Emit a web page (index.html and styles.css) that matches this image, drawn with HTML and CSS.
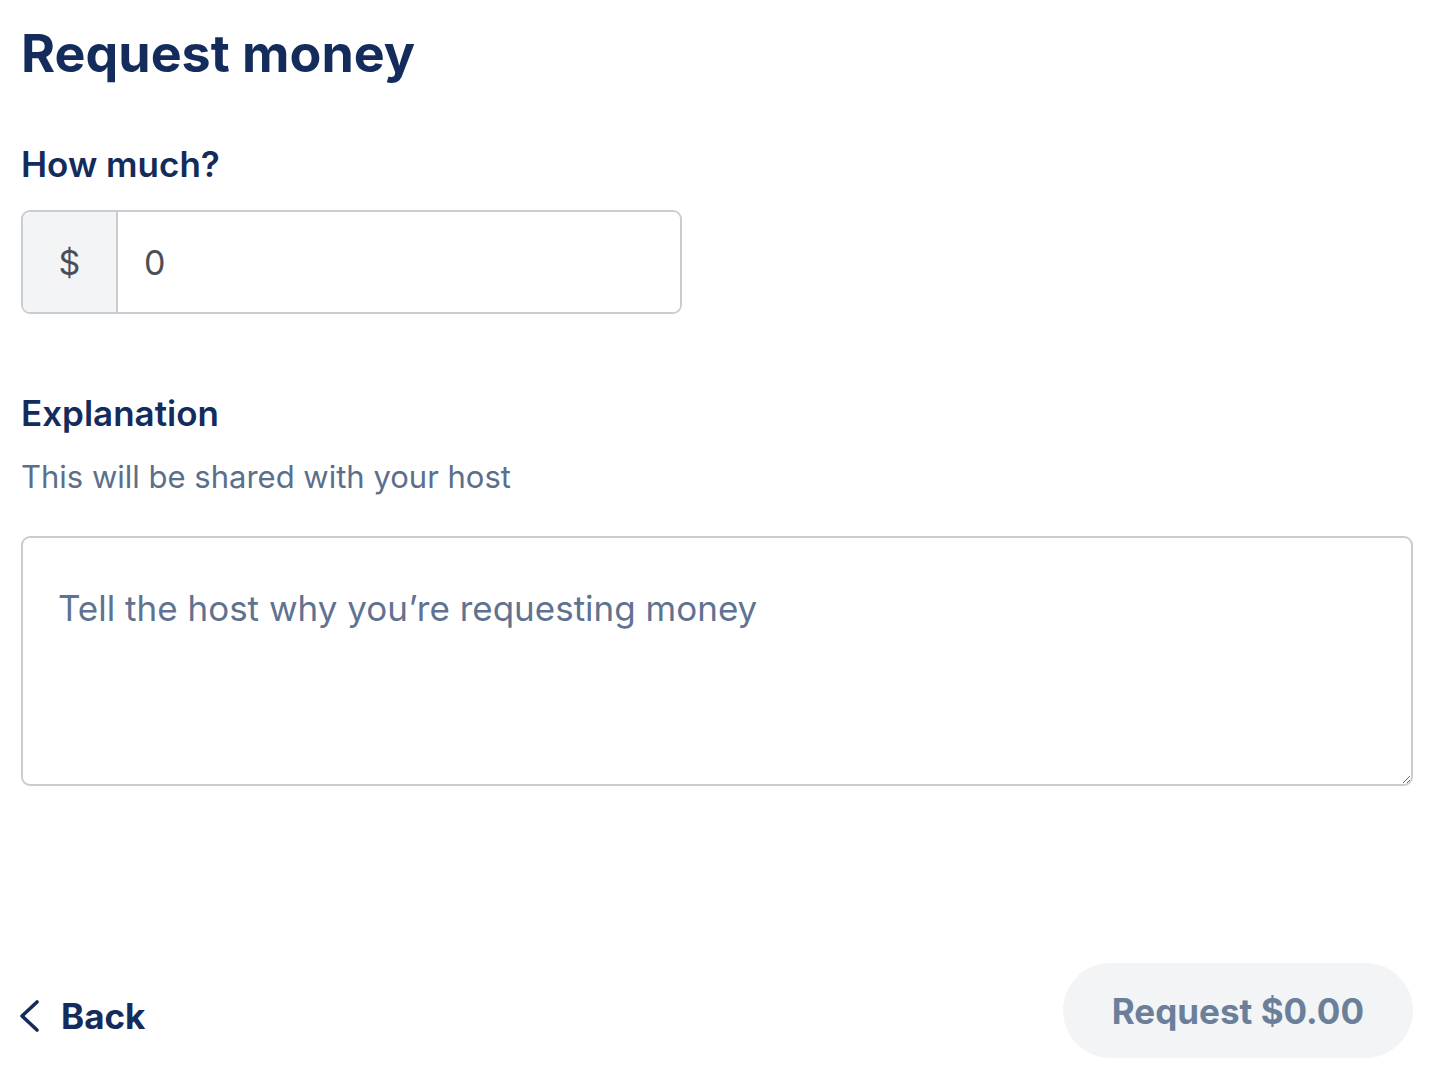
FILE: index.html
```html
<!DOCTYPE html>
<html lang="en">
<head>
    <meta charset="UTF-8">
    <meta name="viewport" content="width=device-width, initial-scale=1.0">
    <title>Request money</title>
    <link rel="stylesheet" href="styles.css">
</head>
<body>

<div class="page">
    <h1>Request money</h1>

    <label class="field-label" for="amount">How much?</label>
    <div class="amount-group">
        <span class="amount-prefix">$</span>
        <input type="text" id="amount" class="amount-input" value="0">
    </div>

    <label class="field-label field-label-spaced" for="explanation">Explanation</label>
    <p class="field-hint">This will be shared with your host</p>
    <textarea id="explanation" class="explanation" placeholder="Tell the host why you’re requesting money"></textarea>

    <div class="footer">
        <a href="#" class="back-link">
            <svg width="22" height="34" viewBox="0 0 22 34" fill="none" stroke="#132c5b" stroke-width="3.6" stroke-linecap="round" stroke-linejoin="round">
                <path d="M18 3 L3 17 L18 31"/>
            </svg>
            <span>Back</span>
        </a>
        <button type="submit" class="request-btn" disabled>Request $0.00</button>
    </div>
</div>

</body>
</html>
```

FILE: styles.css
```css
body {
    margin: 0;
    font-family: Inter, "Noto Sans", sans-serif;
    background: #ffffff;
    color: #132c5b;
}

.page {
    box-sizing: border-box;
    min-height: 100vh;
    padding: 22px 41px 32px 21px;
    display: flex;
    flex-direction: column;
}

h1 {
    margin: 0;
    font-size: 52px;
    line-height: 64px;
    font-weight: 700;
}

.field-label {
    display: block;
    margin-top: 56px;
    font-size: 35px;
    line-height: 44px;
    font-weight: 600;
}

.field-label-spaced {
    margin-top: 77px;
}

.amount-group {
    margin-top: 24px;
    width: 661px;
    height: 104px;
    box-sizing: border-box;
    display: flex;
    border: 2px solid #c9ccd1;
    border-radius: 9px;
    overflow: hidden;
}

.amount-prefix {
    width: 93px;
    display: flex;
    align-items: center;
    justify-content: center;
    background: #f3f4f6;
    border-right: 2px solid #c9ccd1;
    font-size: 34px;
    color: #4a4f57;
}

.amount-input {
    flex: 1;
    border: none;
    outline: none;
    padding: 0 0 0 26px;
    font-family: inherit;
    font-size: 34px;
    color: #4a4f57;
    background: #ffffff;
}

.field-hint {
    margin: 22px 0 0;
    font-size: 31px;
    line-height: 40px;
    color: #5b6f8d;
}

.explanation {
    margin-top: 39px;
    box-sizing: border-box;
    width: 100%;
    height: 250px;
    padding: 46px 35px;
    border: 2px solid #c9ccd1;
    border-radius: 9px;
    font-family: inherit;
    font-size: 35px;
    line-height: 48px;
    color: #4a4f57;
    outline: none;
}

.explanation::placeholder {
    color: #5f7391;
}

.footer {
    margin-top: auto;
    display: flex;
    justify-content: space-between;
    align-items: center;
}

.back-link {
    display: flex;
    align-items: center;
    gap: 20px;
    margin-top: 10px;
    margin-left: -2px;
    color: #132c5b;
    text-decoration: none;
    font-size: 35px;
    font-weight: 700;
}

.request-btn {
    height: 95px;
    padding: 0 49px;
    border: none;
    border-radius: 48px;
    background: #f2f4f6;
    color: #6b7f9a;
    font-family: inherit;
    font-size: 35px;
    font-weight: 700;
}
```
